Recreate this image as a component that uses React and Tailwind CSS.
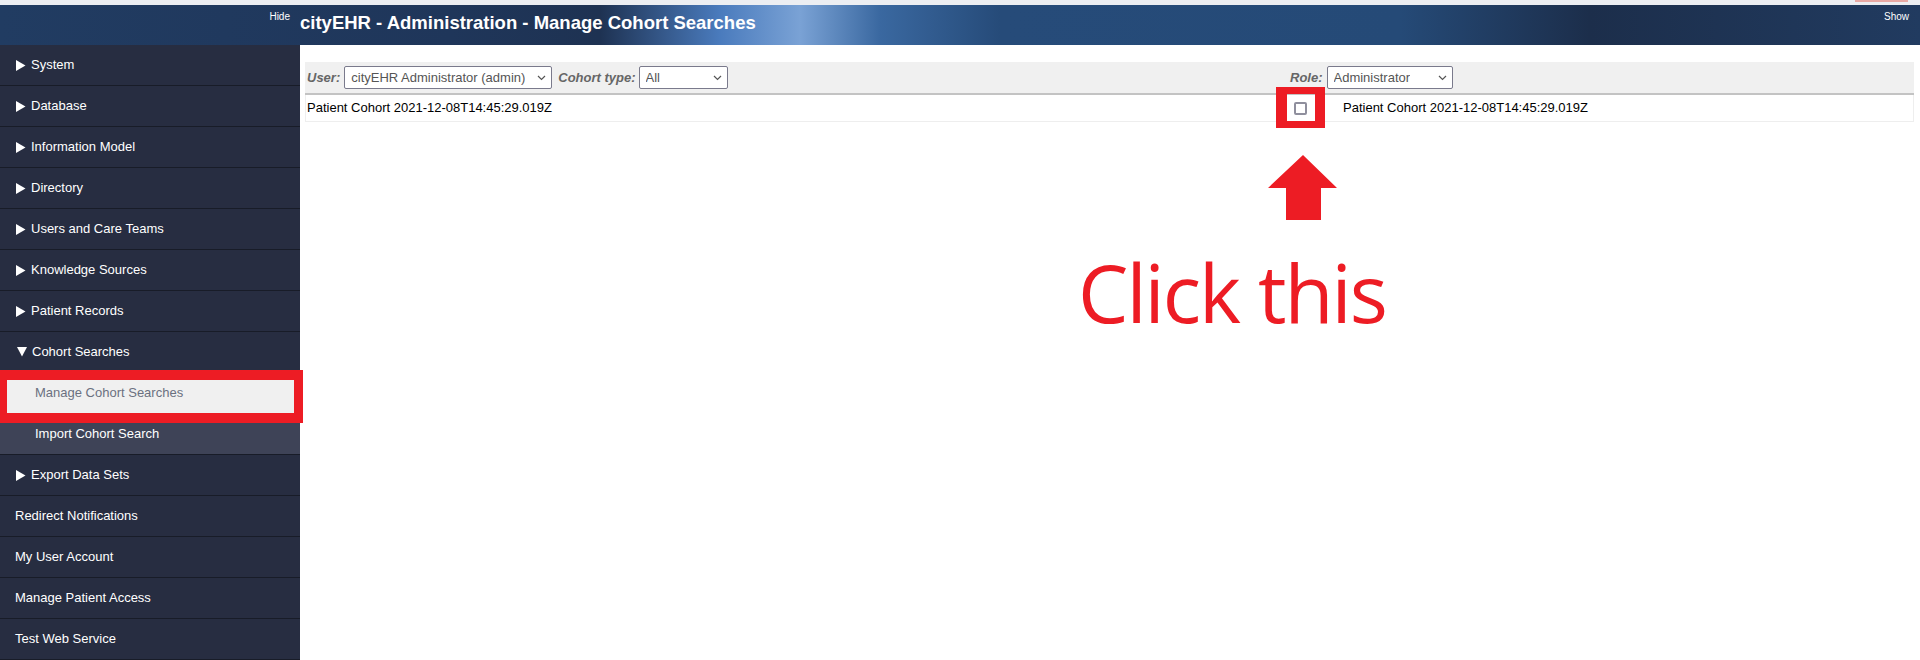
const menu = [
  { label: 'System', arrow: 'right' },
  { label: 'Database', arrow: 'right' },
  { label: 'Information Model', arrow: 'right' },
  { label: 'Directory', arrow: 'right' },
  { label: 'Users and Care Teams', arrow: 'right' },
  { label: 'Knowledge Sources', arrow: 'right' },
  { label: 'Patient Records', arrow: 'right' },
  { label: 'Cohort Searches', arrow: 'down' },
  { label: 'Manage Cohort Searches', sub: true, active: true },
  { label: 'Import Cohort Search', sub: true },
  { label: 'Export Data Sets', arrow: 'right' },
  { label: 'Redirect Notifications' },
  { label: 'My User Account' },
  { label: 'Manage Patient Access' },
  { label: 'Test Web Service' },
];

const Chevron = () => (
  <svg width="9" height="6" viewBox="0 0 9 6" className="shrink-0">
    <path d="M1 1l3.5 3.5L8 1" fill="none" stroke="#555" strokeWidth="1.2" />
  </svg>
);

const FakeSelect = ({ value, className }) => (
  <div
    className={`flex items-center justify-between h-[23px] border border-[#7a7a8c] rounded-[2px] bg-white pl-[6px] pr-[5px] text-[13px] text-[#555] ${className}`}
  >
    <span className="truncate">{value}</span>
    <Chevron />
  </div>
);

const MenuRow = ({ item }) => {
  let bg = 'bg-[#272d41]';
  let color = 'text-white';
  if (item.active) {
    bg = 'bg-[#f0f0f0]';
    color = 'text-[#6b7080]';
  } else if (item.sub) {
    bg = 'bg-[#3e4357]';
  }
  return (
    <div
      className={`h-[41px] flex items-center border-b border-[#181c28] ${bg} ${color} text-[13px]`}
    >
      {item.arrow === 'right' && (
        <>
          {/* small play triangle */}
          <svg width="10" height="11" viewBox="0 0 10 11" className="ml-[16px] mr-[5px] shrink-0">
            <polygon points="0,0 9.5,5.5 0,11" fill="#fff" />
          </svg>
          <span>{item.label}</span>
        </>
      )}
      {item.arrow === 'down' && (
        <>
          <svg width="10" height="10" viewBox="0 0 10 10" className="ml-[17px] mr-[5px] shrink-0">
            <polygon points="0,0 10,0 5,9.5" fill="#fff" />
          </svg>
          <span>{item.label}</span>
        </>
      )}
      {!item.arrow && (
        <span className={item.sub ? 'ml-[35px]' : 'ml-[15px]'}>{item.label}</span>
      )}
    </div>
  );
};

const App = () => {
  return (
    <div
      className="relative w-[1920px] h-[660px] overflow-hidden bg-white"
      style={{ fontFamily: '"Liberation Sans", Arial, sans-serif' }}
    >
      <div className="h-[5px] bg-[#eceef2] flex justify-end">
        <div className="w-[53px] h-[2px] bg-[#e8a9a4] mr-[12px]"></div>
      </div>

      <header className="h-[40px] flex bg-[linear-gradient(90deg,#213c62_0px,#1f365a_450px,#1e3252_600px,#4a7bbd_720px,#7aa2d5_800px,#3a68a0_880px,#264b79_1000px,#254a77_1400px,#1c2e4b_1590px,#213b60_1920px)]">
        <div className="w-[300px] flex justify-end pr-[10px] pt-[4px] text-[10px] text-white">
          Hide
        </div>
        <h1 className="flex-1 pt-[7px] text-[18.5px] font-bold text-white leading-[22px]">
          cityEHR - Administration - Manage Cohort Searches
        </h1>
        <div className="pr-[11px] pt-[4px] text-[10px] text-white">Show</div>
      </header>

      <div className="flex h-[615px]">
        <nav className="w-[300px] shrink-0 bg-[#272d41]">
          {menu.map((item) => (
            <MenuRow key={item.label} item={item} />
          ))}
        </nav>

        <main className="flex-1 pl-[5px] pr-[6px] pt-[17px] text-[13px]">
          <div className="h-[33px] flex items-center bg-[#f0f0f0] border-b-2 border-[#c3c3c3]">
            <div className="w-[985px] flex items-center pl-[2px]">
              <span className="font-bold italic text-[#666]">User:</span>
              <FakeSelect value="cityEHR Administrator (admin)" className="w-[208px] ml-[4px]" />
              <span className="font-bold italic text-[#666] ml-[6px]">Cohort type:</span>
              <FakeSelect value="All" className="w-[89px] ml-[3px]" />
            </div>
            <span className="font-bold italic text-[#666]">Role:</span>
            <FakeSelect value="Administrator" className="w-[126px] ml-[4px]" />
          </div>

          <div className="h-[27px] flex items-center border border-t-0 border-[#eeeeee] text-black">
            <div className="w-[988px] pl-[1px]">Patient Cohort 2021-12-08T14:45:29.019Z</div>
            <div className="w-[13px] h-[13px] border-2 border-[#8f8f9d] rounded-[2px] bg-white"></div>
            <div className="ml-[36px]">Patient Cohort 2021-12-08T14:45:29.019Z</div>
          </div>
        </main>
      </div>

      {/* annotation overlays */}
      <div className="absolute left-0 top-[370px] w-[303px] h-[53px] border-l-[7px] border-r-[9px] border-t-[10px] border-b-[10px] border-[#ed1c24]"></div>
      <div className="absolute left-[1276px] top-[87px] w-[49px] h-[41px] border-l-[11px] border-r-[10px] border-t-[7px] border-b-[7px] border-[#ed1c24]"></div>
      <svg className="absolute left-[1268px] top-[155px]" width="69" height="65" viewBox="0 0 69 65">
        <polygon points="35,0 69,33 53,33 53,65 18,65 18,33 0,33" fill="#ed1c24" />
      </svg>
      <div
        className="absolute left-[1078px] top-[252px] text-[80px] leading-none text-[#ed1c24] tracking-[-2px]"
        style={{ fontFamily: '"Open Sans", sans-serif' }}
      >
        Click this
      </div>
    </div>
  );
};

export default App;
